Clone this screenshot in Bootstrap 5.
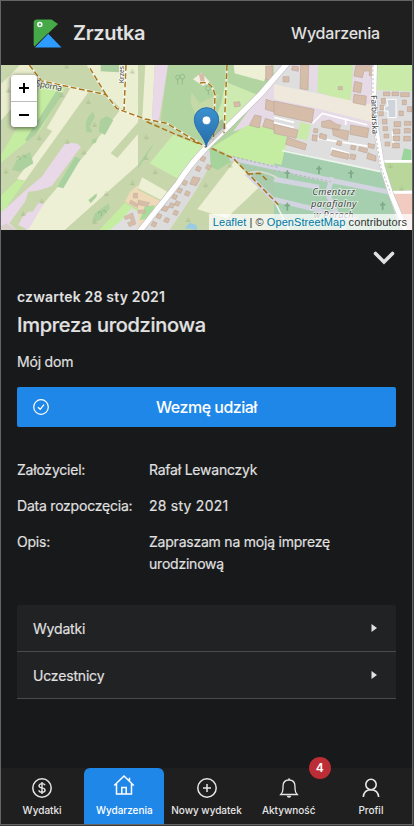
<!DOCTYPE html>
<html lang="pl">
<head>
<meta charset="utf-8">
<meta name="viewport" content="width=device-width, initial-scale=1">
<title>Zrzutka</title>
<link href="https://cdn.jsdelivr.net/npm/bootstrap@5.3.0/dist/css/bootstrap.min.css" rel="stylesheet">
<style>
body{background:#3a3b3d;font-family:Inter,"Liberation Sans",sans-serif;color:#e1e1e1;overflow:hidden}
.app{width:413px;height:825px;background:#18191b;border:1px solid #636466}
.topbar{height:64px;background:#1f1f1f;padding:0 32px}
.brand-name{font-size:20px;font-weight:600;line-height:24px;margin-left:10px;letter-spacing:-.35px}
.page-name{font-size:16px;font-weight:500;line-height:24px;letter-spacing:-.2px}
.map{height:165px;overflow:hidden}
.zoom-box{left:10px;top:10px;width:26px;border-radius:4px;box-shadow:0 1px 5px rgba(0,0,0,.65);background:#fff;overflow:hidden}
.zoom-btn{height:26px;background:#fff;border:0;padding:0}
.zoom-btn + .zoom-btn{border-top:1px solid #bbb}
.credit{right:0;bottom:0;height:16px;line-height:16px;font-size:11px;letter-spacing:.075px;font-family:"Liberation Sans",Arial,sans-serif;background:rgba(255,255,255,.72);color:#333;padding:0 5px 0 4px;white-space:nowrap}
.credit a{color:#0078a8;text-decoration:none}
.event{padding:0 16px}
.toggle-row{height:56px;padding-right:1px}
.ev-date{font-size:14px;font-weight:600;line-height:22px;letter-spacing:.18px}
.ev-title{font-size:20px;font-weight:500;line-height:28px;margin:3px 0 0;letter-spacing:-.29px;-webkit-text-stroke:.2px}
.ev-place{font-size:14px;line-height:22px;margin-top:12px;letter-spacing:-.2px}
.join{height:40px;margin-top:14px;background:#1f87e8;border-radius:2px;font-size:16px;font-weight:500;color:#fff;border:0;padding:0 32px 0 16px;letter-spacing:-.5px}
.facts{font-size:14px;line-height:22px;margin-top:32px;row-gap:14px;grid-template-columns:132px 1fr;letter-spacing:-.22px}
.facts .when{letter-spacing:.24px}
.ev-place,.facts,.section-link{-webkit-text-stroke:.15px}
.sections{margin-top:30px}
.section-link{height:47px;background:#212223;border-bottom:1px solid #4a4b4c;font-size:14px;padding:0 18px 0 16px;color:#e1e1e1;text-decoration:none;letter-spacing:-.18px}
.section-link:first-child{border-radius:2px 2px 0 0}
.tabs{height:56px;background:#1f1f1f}
.tab{flex:1 1 0;margin:0 1px;font-size:10px;font-weight:500;line-height:14px;color:#e6e6e6;text-decoration:none;padding-top:9px;border-radius:6px 6px 0 0;white-space:nowrap}
.tab span{margin-top:4px}
.tab.current{background:#1f87e8;color:#fff;padding-top:6px}
.tab.current span{margin-top:7px}
.count{left:50%;margin-left:20px;top:-11px;width:22px;height:22px;border-radius:50%;background:#bd2d36;color:#fff;font-size:12px;font-weight:600;line-height:22px;text-align:center}
.map text{font-family:"Noto Sans","Open Sans",sans-serif;fill:#444;stroke:#fff;stroke-opacity:.65;stroke-width:5;paint-order:stroke}
</style>
<script src="https://cdn.jsdelivr.net/npm/bootstrap@5.3.0/dist/js/bootstrap.bundle.min.js"></script>
</head>
<body>
<div class="app d-flex flex-column">
  <header class="topbar d-flex align-items-center justify-content-between">
    <div class="d-flex align-items-center">
      <svg width="30" height="30" viewBox="0 0 30 30"><path d="M4 1.500h14.500l6.500 4.500-23.500 22.500q-.8-.5-.8-2V4.500q0-3 3.300-3z" fill="#46a948"/><path d="M15 15.500 28.500 29.500H1.500z" fill="#2d9bff"/><path d="M1.500 29.500 15 15.500" stroke="#1f1f1f" stroke-width=".9"/><circle cx="6.800" cy="6.500" r="2" fill="none" stroke="#fff" stroke-width="1.500"/></svg>
      <span class="brand-name">Zrzutka</span>
    </div>
    <span class="page-name">Wydarzenia</span>
  </header>

  <div class="map position-relative">
    <svg class="d-block" width="411" height="165" viewBox="3 195 1233 495" preserveAspectRatio="none">
      <defs>
        <path id="tuft" d="M-8 6H8M0 6V-7M0 6l-6-7M0 6l6-7" fill="none" stroke="#a3b88b" stroke-width="1.500"/>
        <path id="cross" d="M0-12V12M-8-4H8" fill="none" stroke="#7da986" stroke-width="5"/>
        <linearGradient id="pin" x2="0" y2="1"><stop stop-color="#3b91d0"/><stop offset="1" stop-color="#266ba8"/></linearGradient>
      </defs>
      <rect width="1240" height="700" fill="#c8d7ab"/>
      <!-- western fields -->
      <g transform="translate(0 180)">
        <path d="M0 15H88L110 60 0 185z" fill="#e9edcd"/>
        <path d="M0 15H60L0 75z" fill="#c8d7ab"/>
        <path d="M215 15h45L215 78 195 70z" fill="#c8d7ab"/>
        <path d="M260 15H420V170L365 148 320 104z" fill="#eaefd1"/>
        <path d="M302 15h55v22l-55-3z" fill="#abcea0"/>
        <path d="M128 72 195 85 0 420V290z" fill="#c5eda2"/>
        <path d="M170 92 190 100 90 250 75 240z" fill="#add19e"/>
        <path d="M212 83 265 97 75 362 50 357z" fill="#eef0d5"/>
        <path d="M133 202 157 213 50 358 0 412V310z" fill="#c8d7ab"/>
        <path d="M50 300 90 275 100 310 60 335 35 330z" fill="#add19e"/>
        <path d="M52 360 75 363 0 470V410z" fill="#c5eda2"/>
        <path d="M363 147 420 172V232L362 292 335 280 420 190V310L195 510H78L110 455 250 290z" fill="#eef0d5"/>
        <path d="M332 280 420 180V215L352 294z" fill="#c8d7ab"/>
        <path d="M420 310V400L300 510H195z" fill="#c8d7ab"/>
        <path d="M196 250Q238 245 242 262L155 378Q115 395 85 395L75 425 28 490 50 510H0V460L78 390 125 350Z" fill="#e8d8e8"/>
        <path d="M55 495Q75 450 98 455L118 425 132 430 85 510z" fill="#e8d8e8"/>
        <path d="M225 290 242 297 190 385 172 380z" fill="#a7d19f"/>
        <path d="M280 155Q250 175 260 215L278 218 270 200 285 170zM300 180 320 168 340 180 315 225 296 215zM275 240 292 232 288 248 275 252zM265 420 290 400 290 410 272 430zM325 430 330 445 300 480 275 488 285 460z" fill="#add19e"/>
        <path d="M375 428 420 455V510H298z" fill="#c5eda2"/>
        <path d="M390 395 420 370V450L375 425z" fill="#eed9b8"/>
        <path d="M365 480 395 445 420 460V510H330z" fill="#e0dfdf"/>
        <path d="M400 400h20v14h-20zM392 420l28 16v10l-32-16zM372 470l26-12 10 34-20 8-6-12 12-4-4-10-14 6z" fill="#d5bda9" stroke="#bda594"/>
        <path d="M0 500 20 490 48 510H0z" fill="#d9d0c9"/>
      </g>
      <!-- park, road side plots -->
      <g transform="translate(414 180)">
        <path d="M0 15H24L14 172 0 168z" fill="#c8d7ab"/>
        <path d="M22 15H50L42 178 13 172z" fill="#edf0d5"/>
        <path d="M50 15H90L62 187 42 178z" fill="#e8d8e8"/>
        <path d="M90 15H240L420 70V245L205 258 130 222 68 187z" fill="#b1d4a1"/>
        <path d="M240 15H390L345 90 240 60z" fill="#b1d4a1"/>
        <path d="M287 15H400L378 64 290 40z" fill="#edf0d5"/>
        <path d="M262 65 365 107 215 255 235 170 250 130z" fill="#cdebb0"/>
        <path d="M160 95 185 130 245 100 215 180 175 170 158 130z" fill="#c5d9a6"/>
        <path d="M165 58 190 38 215 65 195 78z" fill="#f4eee2"/><path d="M182 42l15-3 3 24-12 2z" fill="#d5bda9"/>
        <path d="M0 175 205 265 5 510H0z" fill="#c8d7ab"/>
        <path d="M105 225 205 262 128 360 35 310z" fill="#c8efae"/>
        <path d="M12 352 88 395 70 420 0 385z" fill="#edf0d5"/>
        <path d="M60 240Q40 260 25 290L0 325V315L35 265z" fill="#add19e"/>
        <path d="M0 390 72 425 10 510H0z" fill="#eed9b8"/>
        <path d="M20 440 50 435 38 475 5 480z" fill="#a8dc9a"/>
        <path d="M0 420l35 8-6 12-29-6zM0 450h22v10H0z" fill="#d5bda9" stroke="#bda594"/>
        <path d="M210 262 225 300 175 390 95 510H20z" fill="#dddcdc"/>
        <path d="M215 262 290 298 240 330 218 320z" fill="#a6d29c"/>
        <path d="M290 300 420 435V510H160z" fill="#c8d7ab"/>
        <path d="M290 303 365 380 265 475 178 448z" fill="#edf0d5"/>
        <path d="M140 505 155 488 175 495 178 510z" fill="#99cbe3"/>
        <path d="M370 100 420 55V215L345 195 285 215z" fill="#e6dae6"/>
        <path d="M330 195 420 205V325L285 290 225 260z" fill="#c5eda2"/>
        <path d="M290 295 420 325V430z" fill="#a9ccae"/>
        <g fill="#d5bda9" stroke="#b59f90" stroke-width="1.500">
          <path d="M383 18h20v42h-20zM287 127l18-2 2 13-17 3zM384 118l36 12v30l-38-12zM350 165l20 4-6 35-30-8zM382 175l38 12v25l-46-12z"/>
          <path d="M192 288l12 5-6 12-12-5zM208 313l12 5-6 12-12-5zM178 318l12 5-6 12-12-5zM165 350l22 5-12 22-20-5zM137 360l12 5-6 12-12-5zM122 383l12 5-6 12-12-5zM145 392l12 5-6 12-12-5zM107 402l12 5-6 12-12-5zM98 428l12 5-6 12-12-5zM115 422l12 5-6 12-12-5zM75 437l18 5-8 13-16-5zM110 450l12 5-6 12-12-5zM60 460l12 5-6 12-12-5zM83 472l12 5-6 12-12-5zM45 484l12 5-6 12-12-5z"/>
        </g>
      </g>
      <!-- industrial area and cemetery -->
      <g transform="translate(822 180)">
        <path d="M0 15H420V510H270L0 320z" fill="#dfdedf"/>
        <path d="M45 15H300V200L100 190 0 130V60z" fill="#e6dae6"/>
        <path d="M0 70 45 15 130 100 0 75z" fill="#dfdedf"/>
        <path d="M133 15H238L230 125 130 97z" fill="#c9eaa9"/>
        <path d="M305 15H420V95L305 90z" fill="#c9eaa9"/>
        <path d="M0 73 295 135V187L120 143 0 118z" fill="#eee9dc"/>
        <path d="M80 185 110 195 100 240 65 235z" fill="#c9eaa9"/>
        <path d="M0 220 40 230 25 320 0 315z" fill="#c5eda2"/>
        <path d="M32 270 320 335 380 510H0V310L22 315z" fill="#a5cfaf"/>
        <path d="M325 305H420V390L355 392z" fill="#b9d79b"/><path d="M390 265l22 5v30h-30z" fill="#9ad69b"/>
        <path d="M360 400H420V510H385z" fill="#f2cbc0"/>
        <g fill="none" stroke="#d2d4df" stroke-width="15"><path d="M0 323 165 360 350 397M0 358 135 382M0 418 100 442 250 480M175 352 160 400 210 510"/></g>
        <path d="M25 272 320 335M0 420 45 510" stroke="#edf4ec" stroke-width="5" fill="none"/>
        <g fill="none" stroke="#fff" stroke-width="8"><path d="M320 304H420M350 397H420"/></g>
        <g fill="none" stroke="#fff" stroke-width="5"><path d="M115 190 145 160 280 195M170 290 175 265 225 280M130 235 290 260M360 265 355 215M215 175v20"/></g>
        <path d="M0 172 60 187M0 188 60 203" stroke="#fff" stroke-width="5"/>
        <g fill="#d5bda9" stroke="#b59f90" stroke-width="1.500">
          <path d="M80 15h24l-2 75-24-4zM55 18l18 2v14l-20-4zM27 50h18v16H27zM245 17h55v30h-14v-14h-16l-5 20-25-5zM242 64l22 5-4 30-23-5zM240 103l37 5-2 28-38-8zM193 80h12v9h-12z"/>
          <path d="M0 123 120 148 114 188 0 163zM0 192 72 210 66 235 0 220zM40 232l58 20-5 18-58-17zM143 185l25-5 18 12 15 4-8 15-50-10zM175 205l50 8-5 28-42-15zM230 195l55 10-5 28-52-10zM120 205l12 2-2 12-12-2zM116 224l14 2-2 18-14-3zM138 220l20 5-2 15-20-5zM175 270l50 12-3 16-53-12zM232 255l14 3-3 12-14-3zM230 282l16 3-3 14-16-3zM190 242l14 3-3 12-14-3zM256 260l25 7-3 12-25-7zM282 250l20 4-2 12-18-4zM282 278l24 10v16l-28-8z"/>
          <path d="M328 96h20v11h-20zM354 96h20v11h-20zM380 98h26v12h-26zM322 115h12v15h-12zM318 135h14v14h-14zM314 155h14v12h-14zM325 178h14v14h-14zM327 200h14v12h-14zM330 222h14v12h-14zM333 246h14v12h-14zM385 120h12v14h-12zM400 140h14v15h-14zM375 153h13v14h-13zM360 185h20v15h-20zM358 207h20v14h-20zM357 228h20v14h-20zM356 250h20v14h-20zM391 184h20v12h-20zM391 205h18v14h-18zM389 229h20v14h-20z"/>
        </g>
        <path d="M338 118h28v55h-24v-20h-10v-15h10z" fill="#cfd4da" stroke="#fff" stroke-width="3"/>
        <path d="M302 15 300 100 305 200 325 320 350 400 395 510" fill="none" stroke="#c4bfc5" stroke-width="17"/><path d="M302 15 300 100 305 200 325 320 350 400 395 510" fill="none" stroke="#fff" stroke-width="14"/>
        <path d="M297 15v165l25 145 28 75M0 330 170 365" fill="none" stroke="#a6a0a5" stroke-width="2" stroke-dasharray="7 6"/>
        <use href="#cross" x="40" y="343"/><use href="#cross" x="231" y="343"/><use href="#cross" x="40" y="440"/><use href="#cross" x="326" y="438"/><use href="#cross" x="135" y="330"/>
        <use href="#tuft" x="349" y="317"/><use href="#tuft" x="383" y="384"/>
      </g>
      <!-- roads -->
      <g transform="translate(414 180)" fill="none">
        <path d="M275 295 420 325" stroke="#d2d4df" stroke-width="13"/><path d="M325 340 420 432" stroke="#d2d4df" stroke-width="13"/>
        <path d="M330 340Q370 325 420 355" stroke="#d8dccc" stroke-width="5"/>
        <path d="M285 290 420 322" stroke="#999" stroke-width="2" stroke-dasharray="7 6"/>
        <path d="M478 -25 370 100Q310 160 270 200L205 262Q150 320 120 370L0 520" stroke="#bfb9bd" stroke-width="19"/>
        <path d="M478 -25 370 100Q310 160 270 200L205 262Q150 320 120 370L0 520" stroke="#fff" stroke-width="16"/>
      </g>
      <g fill="none" stroke="#fff" stroke-opacity=".65" stroke-width="7"><path d="M88 195 125 243 318 284 350 325 375 335 435 357 500 370 619 442M270 205 318 284M378 195 372 330M681 195 672 400M600 249Q635 240 645 285L640 420"/></g>
      <g fill="none" stroke="#a97618" stroke-width="4.500" stroke-dasharray="17 8"><path d="M88 195 125 243 318 284 350 325 375 335 435 357 500 370 619 442M440 365 520 400 600 432M270 205 318 284M378 195 372 330M681 195 672 400M600 249Q635 240 645 285L640 420M635 445 700 475 835 614M742 522 780 520 800 540"/></g>
      <g><use href="#tuft" x="200" y="198"/><use href="#tuft" x="397" y="213"/><use href="#tuft" x="186" y="284"/><use href="#tuft" x="265" y="304"/><use href="#tuft" x="284" y="373"/><use href="#tuft" x="118" y="413"/><use href="#tuft" x="202" y="424"/><use href="#tuft" x="252" y="456"/><use href="#tuft" x="18" y="513"/><use href="#tuft" x="319" y="580"/><use href="#tuft" x="397" y="548"/><use href="#tuft" x="125" y="603"/><use href="#tuft" x="70" y="640"/><use href="#tuft" x="284" y="664"/><use href="#tuft" x="439" y="410"/><use href="#tuft" x="439" y="472"/><use href="#tuft" x="466" y="514"/><use href="#tuft" x="617" y="554"/><use href="#tuft" x="565" y="658"/><use href="#tuft" x="690" y="495"/><use href="#tuft" x="25" y="270"/></g>
      <g fill="none" stroke="#86b07b" stroke-width="2"><circle cx="533" cy="232" r="6"/><circle cx="547" cy="230" r="7"/><path d="M533 238v15M547 237v17M625 270v15"/><circle cx="624" cy="265" r="7"/><path d="M50 472q12-8 10 8m5-10q10-12 12 4M293 640q14-12 11 8m4-14q9-8 10 5"/></g>
      <text transform="translate(106 258) rotate(11)" font-size="26" textLength="80">Sporna</text>
      <text transform="translate(372 250) rotate(-90)" font-size="22" textLength="52" lengthAdjust="spacingAndGlyphs">Krzes</text>
      <text transform="translate(1113 286) rotate(88)" font-size="25" textLength="117">Farbiarska</text>
      <g font-size="28" font-style="italic" text-anchor="middle"><text x="1001" y="585" textLength="128">Cmentarz</text><text x="1001" y="621" textLength="136">parafialny</text><text x="1001" y="655" textLength="120">w Porach</text></g>
      <!-- pin -->
      <path d="M620 443 680 385 668 358 645 370z" fill="#333" opacity=".25"/>
      <path d="M619 441C614 410 583 391 583 358A36.500 35 0 0 1 656 358C656 391 624 410 619 441z" fill="url(#pin)" stroke="#2a70ad" stroke-width="3"/>
      <circle cx="619.500" cy="361" r="13" fill="#fff" stroke="#2a70ad" stroke-width="2"/>
    </svg>
    <div class="zoom-box position-absolute d-flex flex-column">
      <button class="zoom-btn d-flex align-items-center justify-content-center" aria-label="Przybliż"><svg width="12" height="12" viewBox="0 0 12 12"><path d="M1 6h10M6 1v10" stroke="#000" stroke-width="2"/></svg></button>
      <button class="zoom-btn d-flex align-items-center justify-content-center" aria-label="Oddal"><svg width="12" height="12" viewBox="0 0 12 12"><path d="M1 6h10" stroke="#000" stroke-width="2"/></svg></button>
    </div>
    <div class="credit position-absolute"><a href="#">Leaflet</a> | © <a href="#">OpenStreetMap</a> contributors</div>
  </div>

  <main class="event d-flex flex-column flex-grow-1">
    <div class="toggle-row d-flex align-items-center justify-content-end">
      <svg width="22" height="14" viewBox="0 0 22 14"><path d="M2.500 2.500 11 11 19.500 2.500" fill="none" stroke="#e1e1e1" stroke-width="3.600" stroke-linecap="round"/></svg>
    </div>
    <div class="ev-date">czwartek 28 sty 2021</div>
    <h1 class="ev-title">Impreza urodzinowa</h1>
    <div class="ev-place">Mój dom</div>
    <button class="join btn d-flex align-items-center">
      <svg width="16" height="16" viewBox="0 0 16 16" fill="none" stroke="#fff"><circle cx="8" cy="8" r="7.300" stroke-width="1.200"/><path d="M5 8.200 7.200 10.300 11 5.700" stroke-width="1.300"/></svg>
      <span class="flex-grow-1 text-center">Wezmę udział</span>
    </button>
    <div class="facts d-grid">
      <div>Założyciel:</div><div>Rafał Lewanczyk</div>
      <div>Data rozpoczęcia:</div><div class="when">28 sty 2021</div>
      <div>Opis:</div><div>Zapraszam na moją imprezę<br>urodzinową</div>
    </div>
    <div class="sections">
      <a href="#" class="section-link d-flex align-items-center justify-content-between">Wydatki<svg width="8" height="10" viewBox="0 0 8 10"><path d="M1.500 1v8l5.500-4z" fill="#e1e1e1"/></svg></a>
      <a href="#" class="section-link d-flex align-items-center justify-content-between">Uczestnicy<svg width="8" height="10" viewBox="0 0 8 10"><path d="M1.500 1v8l5.500-4z" fill="#e1e1e1"/></svg></a>
    </div>
  </main>

  <nav class="tabs d-flex">
    <a href="#" class="tab d-flex flex-column align-items-center"><svg width="22" height="22" viewBox="0 0 22 22" fill="none" stroke="currentColor"><circle cx="11" cy="11" r="9.200" stroke-width="1.500"/><path d="M14 8.300Q13.500 6.600 11 6.600T8 8.700Q8 10.400 11 10.900T14.100 13.200Q14 15.200 11 15.200T7.900 13.200M11 5v12" stroke-width="1.400"/></svg><span>Wydatki</span></a>
    <a href="#" class="tab current d-flex flex-column align-items-center"><svg width="22" height="22" viewBox="0 0 22 22" fill="none" stroke="currentColor" stroke-width="1.500"><path d="M3.500 10v10h15V10M1.200 11.500 11 2l9.800 9.500M16.500 6.500V3.700M8.800 20v-6.500h4.400V20"/></svg><span>Wydarzenia</span></a>
    <a href="#" class="tab d-flex flex-column align-items-center"><svg width="22" height="22" viewBox="0 0 22 22" fill="none" stroke="currentColor" stroke-width="1.500"><circle cx="11" cy="11" r="9.200"/><path d="M11 7v8M7 11h8"/></svg><span>Nowy wydatek</span></a>
    <a href="#" class="tab position-relative d-flex flex-column align-items-center"><svg width="22" height="22" viewBox="0 0 22 22" fill="none" stroke="currentColor" stroke-width="1.300"><path d="M2.800 17.500Q5 15.300 5 11.500V9.300Q5 3 11 3T17 9.300V11.500Q17 15.300 19.200 17.500z"/><path d="M11 3V1.300"/><path d="M8.700 18.800h4.600Q13 20.800 11 20.800T8.700 18.800z" fill="currentColor" stroke="none"/></svg><span>Aktywność</span><b class="count position-absolute">4</b></a>
    <a href="#" class="tab d-flex flex-column align-items-center"><svg width="22" height="22" viewBox="0 0 22 22" fill="none" stroke="currentColor" stroke-width="1.600"><circle cx="11" cy="7.500" r="5.200"/><path d="M3.300 20Q4 12.500 11 12.700T18.700 20"/></svg><span>Profil</span></a>
  </nav>
</div>
</body>
</html>
